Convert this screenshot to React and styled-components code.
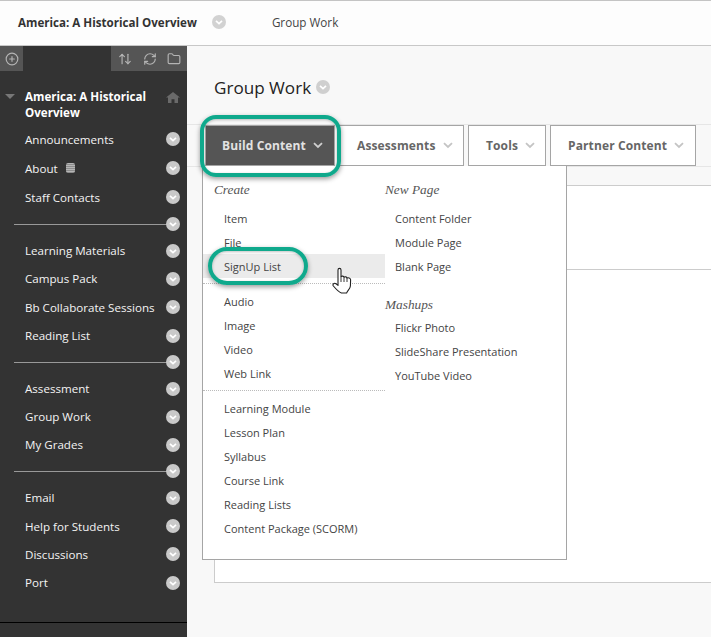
import React from 'react';
import styled, { createGlobalStyle } from 'styled-components';
import { CirclePlus, ArrowUpDown, RefreshCw, Folder } from 'lucide-react';

const GlobalStyle = createGlobalStyle`
    html, body {
        margin: 0;
        padding: 0;
        height: 100%;
        overflow: hidden;
        background: #f8f8f8;
        font-family: "Open Sans", "Liberation Sans", sans-serif;
    }
    * {
        box-sizing: border-box;
    }
`;

const Chevron = ({ size = 14, color = '#c9c9c9' }) => (
    <svg width={size} height={size} viewBox="0 0 14 14">
        <circle cx="7" cy="7" r="7" fill={color} />
        <path d="M4 5.8 L7 8.6 L10 5.8" fill="none" stroke="#fff" strokeWidth="1.7" />
    </svg>
);

const Caret = ({ color }) => (
    <svg width="10" height="7" viewBox="0 0 10 7">
        <path d="M1 1.2 L5 5 L9 1.2" fill="none" stroke={color} strokeWidth="1.8" />
    </svg>
);

const HandCursor = () => (
    <svg width="20" height="27" viewBox="0 0 20 27">
        <path
            d="M6 3 C6 .8 9 .8 9 3 L9 9.6 C10 8.8 11.6 9 12 10.2 C13 9.4 14.6 9.8 15 11 C16 10.4 18.6 10.8 18.6 12.8 L18.4 19 C18.2 22 15.6 23.4 14.6 26 L9.4 26 C6.6 25 3.4 21.4 1.4 19 C.2 17.4 2.2 15.4 4 16.8 L6 18.4 Z"
            fill="#fff"
            stroke="#222"
            strokeWidth="1.1"
            strokeLinejoin="round"
        />
        <path d="M9 9.6 V15 M12 10.2 V15 M15 11 V15" stroke="#222" strokeWidth="0.9" fill="none" />
    </svg>
);

const navGroups = [
    {
        row: 29,
        items: [
            { label: 'Announcements' },
            { label: 'About', badge: true },
            { label: 'Staff Contacts' },
        ],
    },
    {
        row: 28.3,
        items: [
            { label: 'Learning Materials' },
            { label: 'Campus Pack' },
            { label: 'Bb Collaborate Sessions' },
            { label: 'Reading List' },
        ],
    },
    {
        row: 28,
        items: [
            { label: 'Assessment' },
            { label: 'Group Work' },
            { label: 'My Grades' },
        ],
    },
    {
        row: 28.3,
        items: [
            { label: 'Email' },
            { label: 'Help for Students' },
            { label: 'Discussions' },
            { label: 'Port' },
        ],
    },
];

const createGroups = [
    ['Item', 'File', 'SignUp List'],
    ['Audio', 'Image', 'Video', 'Web Link'],
    ['Learning Module', 'Lesson Plan', 'Syllabus', 'Course Link', 'Reading Lists', 'Content Package (SCORM)'],
];

const App = () => {
    return (
        <Page>
            <GlobalStyle />
            <Header>
                <CourseName>America: A Historical Overview</CourseName>
                <Chevron size={14} color="#d2d2d2" />
                <Crumb>Group Work</Crumb>
            </Header>
            <Body>
                <Sidebar>
                    <SideTools>
                        <ToolBox>
                            <CirclePlus size={14} />
                        </ToolBox>
                        <ToolBox $wide>
                            <ArrowUpDown size={14} />
                            <RefreshCw size={14} />
                            <Folder size={14} />
                        </ToolBox>
                    </SideTools>
                    <CourseRow>
                        <Triangle />
                        <CourseTitle>America: A Historical Overview</CourseTitle>
                        <svg width="14" height="11" viewBox="0 0 14 12" preserveAspectRatio="none">
                            <path d="M7 0 L14 6 L12 6 L12 12 L8.5 12 L8.5 8 L5.5 8 L5.5 12 L2 12 L2 6 L0 6 Z" fill="#6a6a6a" />
                        </svg>
                    </CourseRow>
                    {navGroups.map((group, i) => (
                        <NavGroup key={i}>
                            {group.items.map((item) => (
                                <NavRow key={item.label} $height={group.row}>
                                    <NavLabel>
                                        {item.label}
                                        {item.badge && <NavBadge />}
                                    </NavLabel>
                                    <Chevron />
                                </NavRow>
                            ))}
                            {i < navGroups.length - 1 && (
                                <NavDivider>
                                    <Chevron />
                                </NavDivider>
                            )}
                        </NavGroup>
                    ))}
                    <SideFooter />
                </Sidebar>
                <Main>
                    <TitleRow>
                        <PageTitle>Group Work</PageTitle>
                        <Chevron size={14} color="#cfcfcf" />
                    </TitleRow>
                    <ActionBar>
                        <ActionButton $active $width={130}>
                            Build Content <Caret color="#cfcfcf" />
                        </ActionButton>
                        <ActionButton $width={125}>
                            Assessments <Caret color="#c4c4c4" />
                        </ActionButton>
                        <ActionButton $width={78}>
                            Tools <Caret color="#c4c4c4" />
                        </ActionButton>
                        <ActionButton $width={146}>
                            Partner Content <Caret color="#c4c4c4" />
                        </ActionButton>
                    </ActionBar>
                    <ContentPanel>
                        <PanelRow />
                    </ContentPanel>

                    <Menu>
                        <MenuColumn $width={182} $inset={11}>
                            <MenuHeading>Create</MenuHeading>
                            {createGroups.map((group, i) => (
                                <MenuGroup key={i} $divided={i > 0}>
                                    {group.map((label) => (
                                        <MenuItem key={label} $hover={label === 'SignUp List'}>
                                            {label}
                                        </MenuItem>
                                    ))}
                                </MenuGroup>
                            ))}
                        </MenuColumn>
                        <MenuColumn $inset={0}>
                            <MenuHeading>New Page</MenuHeading>
                            <MenuGroup>
                                <MenuItem>Content Folder</MenuItem>
                                <MenuItem>Module Page</MenuItem>
                                <MenuItem>Blank Page</MenuItem>
                            </MenuGroup>
                            <MenuHeading $second>Mashups</MenuHeading>
                            <MenuGroup>
                                <MenuItem>Flickr Photo</MenuItem>
                                <MenuItem>SlideShare Presentation</MenuItem>
                                <MenuItem>YouTube Video</MenuItem>
                            </MenuGroup>
                        </MenuColumn>
                    </Menu>

                    <Callout $left={13} $top={69} $width={141} $height={62} $radius={16} />
                    <Callout $left={21} $top={201} $width={100} $height={38} $radius={19} />
                    <CursorSpot>
                        <HandCursor />
                    </CursorSpot>
                </Main>
            </Body>
        </Page>
    );
};

export default App;

const Page = styled.div`
    width: 711px;
    height: 637px;
    display: flex;
    flex-direction: column;
    overflow: hidden;
`;

const Header = styled.header`
    height: 46px;
    flex: none;
    display: flex;
    align-items: center;
    padding: 0 0 2px 18px;
    background: #fdfdfd;
    border-top: 1px solid #c4c4c4;
    border-bottom: 1px solid #c8c8c8;
`;

const CourseName = styled.div`
    font-size: 11.6px;
    font-weight: 700;
    color: #333;
    margin-right: 15px;
`;

const Crumb = styled.div`
    font-size: 11.7px;
    color: #444;
    margin-left: 46px;
`;

const Body = styled.div`
    flex: 1;
    display: flex;
    min-height: 0;
`;

const Sidebar = styled.aside`
    width: 187px;
    flex: none;
    background: #333;
    display: flex;
    flex-direction: column;
    color: #fff;
`;

const SideTools = styled.div`
    height: 25px;
    display: flex;
    justify-content: space-between;
`;

const ToolBox = styled.div`
    width: ${(p) => (p.$wide ? '76px' : '23px')};
    background: #555;
    color: #b4b4b4;
    display: flex;
    align-items: center;
    justify-content: ${(p) => (p.$wide ? 'space-between' : 'center')};
    padding: ${(p) => (p.$wide ? '0 6px 0 7px' : '0')};
`;

const CourseRow = styled.div`
    display: flex;
    align-items: flex-start;
    padding: 18px 7px 0 5px;
    height: 53.5px;

    > svg {
        margin-top: 3px;
    }
`;

const Triangle = styled.div`
    width: 0;
    height: 0;
    margin: 5px 10px 0 0;
    border-left: 5px solid transparent;
    border-right: 5px solid transparent;
    border-top: 5px solid #777;
`;

const CourseTitle = styled.div`
    flex: 1;
    padding-right: 12px;
    font-size: 11.6px;
    font-weight: 700;
    line-height: 16px;
`;

const NavGroup = styled.div`
    display: flex;
    flex-direction: column;
`;

const NavRow = styled.div`
    height: ${(p) => p.$height}px;
    display: flex;
    align-items: center;
    justify-content: space-between;
    padding: 0 7px 0 25px;
`;

const NavLabel = styled.div`
    font-size: 11.6px;
    color: #f4f4f4;
    display: flex;
    align-items: center;
`;

const NavBadge = styled.span`
    width: 9px;
    height: 10px;
    margin-left: 8px;
    border-radius: 2px;
    background: repeating-linear-gradient(0deg, #8c8c8c 0 1px, #b5b5b5 1px 2px);
`;

const NavDivider = styled.div`
    height: 25px;
    margin-left: 14px;
    padding-right: 7px;
    display: flex;
    align-items: center;
    justify-content: flex-end;
    background: linear-gradient(#999, #999) left center / 160px 1px no-repeat;
`;

const SideFooter = styled.div`
    margin-top: auto;
    height: 15px;
    border-top: 1px solid #000;
`;

const Main = styled.main`
    flex: 1;
    position: relative;
    background: #f8f8f8;
    min-width: 0;
`;

const TitleRow = styled.div`
    height: 78px;
    display: flex;
    align-items: center;
    gap: 5px;
    padding: 4px 0 0 27px;
`;

const PageTitle = styled.h1`
    margin: 0;
    font-size: 17.1px;
    font-weight: 400;
    color: #222;
`;

const ActionBar = styled.div`
    height: 43px;
    display: flex;
    gap: 4px;
    padding-left: 18px;
    border-top: 1px solid #e6e6e6;
    border-bottom: 1px solid #e6e6e6;
`;

const ActionButton = styled.div`
    width: ${(p) => p.$width}px;
    height: 41px;
    display: flex;
    align-items: center;
    gap: 4px;
    padding-left: ${(p) => (p.$active ? '16px' : '17px')};
    font-size: 12px;
    font-weight: 700;
    letter-spacing: 0.12px;
    white-space: pre;
    color: ${(p) => (p.$active ? '#e2e2e2' : '#666')};
    background: ${(p) => (p.$active ? '#555' : '#fff')};
    border: 1px solid #a5a5a5;
`;

const ContentPanel = styled.div`
    margin: 18px 0 0 27px;
    height: 398px;
    background: #fff;
    border: 1px solid #ccc;
    border-right: none;
`;

const PanelRow = styled.div`
    height: 84px;
    border-bottom: 1px solid #ccc;
`;

const Menu = styled.div`
    position: absolute;
    left: 15px;
    top: 120px;
    width: 365px;
    height: 394px;
    display: flex;
    background: #fff;
    border: 1px solid #a5a5a5;
    border-top: none;
`;

const MenuColumn = styled.div`
    --inset: ${(p) => p.$inset}px;
    width: ${(p) => (p.$width ? `${p.$width}px` : 'auto')};
    display: flex;
    flex-direction: column;
    padding-top: 15px;
`;

const MenuHeading = styled.div`
    font-family: "Liberation Serif", serif;
    font-style: italic;
    font-size: 13.3px;
    line-height: 18px;
    height: 18px;
    padding-left: var(--inset);
    margin: ${(p) => (p.$second ? '18px 0 1px' : '0 0 7px')};
    color: #555;
`;

const MenuGroup = styled.div`
    display: flex;
    flex-direction: column;
    ${(p) => p.$divided && `
        margin-top: 5px;
        padding-top: 5px;
        border-top: 1px dotted #bbb;
    `}
`;

const MenuItem = styled.div`
    height: 24px;
    display: flex;
    align-items: center;
    padding-left: calc(var(--inset) + 10px);
    font-size: 11px;
    color: #444;
    background: ${(p) => (p.$hover ? '#ebebeb' : 'transparent')};
`;

const Callout = styled.div`
    position: absolute;
    left: ${(p) => p.$left}px;
    top: ${(p) => p.$top}px;
    width: ${(p) => p.$width}px;
    height: ${(p) => p.$height}px;
    border: 4px solid #0fa98c;
    border-radius: ${(p) => p.$radius}px;
    box-shadow: 0 2px 5px rgba(0, 0, 0, 0.4), inset 0 1px 3px rgba(0, 0, 0, 0.25);
    pointer-events: none;
`;

const CursorSpot = styled.div`
    position: absolute;
    left: 145px;
    top: 221px;
`;
